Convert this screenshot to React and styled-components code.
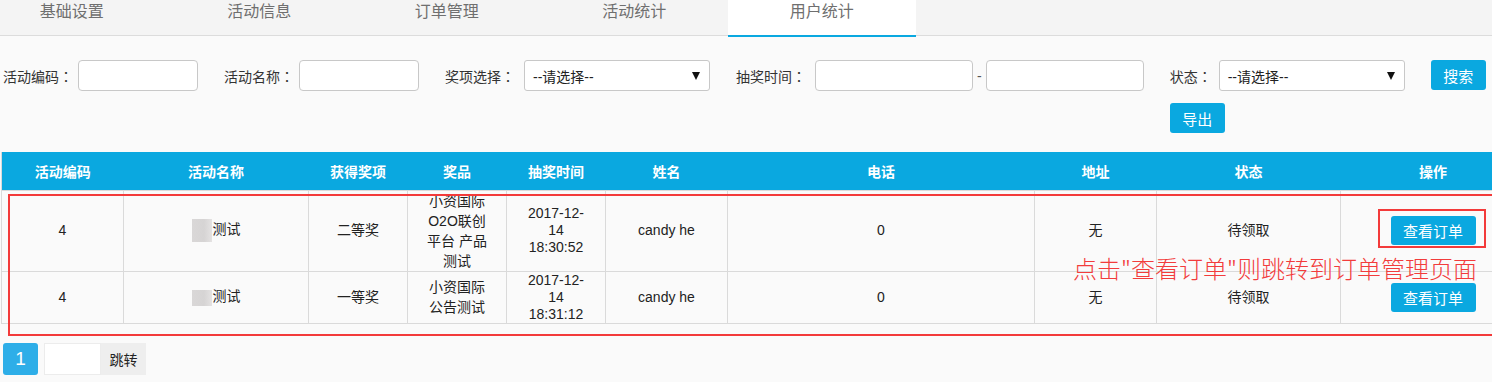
import React from "react";
import styled, { createGlobalStyle } from "styled-components";

const Global = createGlobalStyle`
  html, body { margin: 0; padding: 0; overflow: hidden; }
  body {
    background: #fafafa;
    font-family: "Liberation Sans", Arial, "Noto Sans CJK SC", sans-serif;
    font-size: 14px;
    color: #333;
  }
  * { box-sizing: border-box; }
`;

const Page = styled.div`
  width: 1492px;
  min-height: 382px;
`;

const TabBar = styled.div`
  display: flex;
  height: 36px;
  background: #f4f4f4;
  border-bottom: 1px solid #dcdcdc;
`;

const TabList = styled.div`
  display: flex;
  margin-left: -22px;
`;

const Tab = styled.div`
  width: 187.5px;
  height: 37px;
  line-height: 24px;
  text-align: center;
  font-size: 16px;
  color: #6f6f6f;
  background: ${(p) => (p.$active ? "#ffffff" : "transparent")};
  border-bottom: 2px solid ${(p) => (p.$active ? "#0aa8e0" : "transparent")};
`;

const FilterBar = styled.div`
  display: flex;
  align-items: flex-start;
  gap: 26px;
  padding: 24px 0 0 3px;
`;

const Field = styled.div`
  display: flex;
  align-items: center;
  height: 31px;
  gap: ${(p) => p.$gap || 5}px;
`;

const Label = styled.span`
  color: #333;
  white-space: nowrap;
`;

const Colon = styled.span`
  font-family: "Noto Sans CJK TC", sans-serif;
`;

const Range = styled.div`
  display: flex;
  align-items: center;
  gap: 4px;
`;

const TextInput = styled.div`
  width: ${(p) => p.$w}px;
  height: 31px;
  background: #fff;
  border: 1px solid #c8c8c8;
  border-radius: 4px;
`;

const Dash = styled.span`
  color: #555;
`;

const SelectBox = styled.div`
  width: 186px;
  height: 31px;
  background: #fff;
  border: 1px solid #c8c8c8;
  border-radius: 3px;
  display: flex;
  align-items: center;
  justify-content: space-between;
  padding: 0 9px 0 8px;
  color: #222;
`;

const Caret = styled.span`
  width: 0;
  height: 0;
  border-left: 4px solid transparent;
  border-right: 4px solid transparent;
  border-top: 8px solid #111;
`;

const StatusCol = styled.div`
  display: flex;
  flex-direction: column;
  align-items: flex-start;
  gap: 12px;
`;

const Button = styled.button`
  height: ${(p) => p.$h || 30}px;
  width: ${(p) => p.$w || 55}px;
  border: none;
  border-radius: 3px;
  background: #0aa8e0;
  color: #fff;
  font-family: "Liberation Sans", "Noto Sans CJK SC", sans-serif;
  font-size: 15px;
  padding: 0;
  cursor: pointer;
`;

const TableWrap = styled.div`
  position: relative;
  margin: 19px 0 0 1px;
`;

const Table = styled.table`
  border-collapse: collapse;
  table-layout: fixed;
  width: 1524px;
  border-left: 1px solid #dadada;

  th {
    height: 38px;
    background: #0aa8e0;
    color: #fff;
    font-weight: bold;
    font-size: 14px;
    text-align: center;
    padding: 0;
    border: none;
  }

  tbody tr:first-child td {
    border-top: 1px solid #dadada;
  }
`;

const Td = styled.td`
  text-align: center;
  vertical-align: middle;
  padding: 0 15px;
  border: 1px solid #dadada;
  border-top: none;
  color: #222;
  line-height: ${(p) => p.$lh || 17}px;
`;

const Blur = styled.span`
  display: inline-block;
  width: ${(p) => p.$w}px;
  height: ${(p) => p.$h}px;
  vertical-align: middle;
  background: linear-gradient(90deg, #d9d7d7 0%, #d6d4d4 60%, #e4e2e2 100%);
  margin-right: 1px;
`;

const AnnoBox = styled.div`
  position: absolute;
  border: 2px solid #f33a3a;
  pointer-events: none;
`;

const AnnoText = styled.div`
  position: absolute;
  left: 1072px;
  top: 102px;
  font-family: "Noto Sans CJK SC", sans-serif;
  font-weight: 300;
  font-size: 24px;
  line-height: 28px;
  color: #f23c3c;
  white-space: nowrap;
`;

const Pager = styled.div`
  display: flex;
  align-items: center;
  margin: 19px 0 0 3px;
  height: 32px;
`;

const PageNum = styled.div`
  width: 35px;
  height: 32px;
  border-radius: 3px;
  background: #2eaee8;
  color: #fff;
  font-size: 19px;
  display: flex;
  align-items: center;
  justify-content: center;
  margin-right: 6px;
`;

const JumpInput = styled.div`
  width: 57px;
  height: 32px;
  background: #fff;
  border: 1px solid #ececec;
`;

const JumpBtn = styled.div`
  width: 45px;
  height: 32px;
  background: #eeeeee;
  color: #222;
  display: flex;
  align-items: center;
  justify-content: center;
`;

const cols = [122, 185, 99, 99, 99, 122, 307, 122, 184, 185];
const heads = ["活动编码", "活动名称", "获得奖项", "奖品", "抽奖时间", "姓名", "电话", "地址", "状态", "操作"];

const rows = [
  {
    id: "4",
    blur: [20, 23],
    prize: "二等奖",
    item: "小资国际O2O联创平台 产品测试",
    time: "2017-12-14 18:30:52",
  },
  {
    id: "4",
    blur: [20, 16],
    prize: "一等奖",
    item: "小资国际公告测试",
    time: "2017-12-14 18:31:12",
  },
];

const FieldLabel = ({ children }) => (
  <Label>
    {children}
    <Colon>：</Colon>
  </Label>
);

export default function App() {
  return (
    <Page>
      <Global />
      <TabBar>
        <TabList>
          {["基础设置", "活动信息", "订单管理", "活动统计", "用户统计"].map((t, i) => (
            <Tab key={t} $active={i === 4}>
              {t}
            </Tab>
          ))}
        </TabList>
      </TabBar>

      <FilterBar>
        <Field>
          <FieldLabel>活动编码</FieldLabel>
          <TextInput $w={120} />
        </Field>
        <Field>
          <FieldLabel>活动名称</FieldLabel>
          <TextInput $w={120} />
        </Field>
        <Field $gap={9}>
          <FieldLabel>奖项选择</FieldLabel>
          <SelectBox>
            <span>--请选择--</span>
            <Caret />
          </SelectBox>
        </Field>
        <Field $gap={9}>
          <FieldLabel>抽奖时间</FieldLabel>
          <Range>
            <TextInput $w={158} />
            <Dash>-</Dash>
            <TextInput $w={158} />
          </Range>
        </Field>
        <StatusCol>
          <Field $gap={7}>
            <FieldLabel>状态</FieldLabel>
            <SelectBox>
              <span>--请选择--</span>
              <Caret />
            </SelectBox>
          </Field>
          <Button>导出</Button>
        </StatusCol>
        <Button>搜索</Button>
      </FilterBar>

      <TableWrap>
        <Table>
          <colgroup>
            {cols.map((w, i) => (
              <col key={i} style={{ width: w }} />
            ))}
          </colgroup>
          <thead>
            <tr>
              {heads.map((h) => (
                <th key={h}>{h}</th>
              ))}
            </tr>
          </thead>
          <tbody>
            {rows.map((r, i) => (
              <tr key={i}>
                <Td>{r.id}</Td>
                <Td>
                  <Blur $w={r.blur[0]} $h={r.blur[1]} />
                  测试
                </Td>
                <Td>{r.prize}</Td>
                <Td $lh={20}>{r.item}</Td>
                <Td>{r.time}</Td>
                <Td>candy he</Td>
                <Td>0</Td>
                <Td>无</Td>
                <Td>待领取</Td>
                <Td>
                  <Button $w={85} $h={29}>
                    查看订单
                  </Button>
                </Td>
              </tr>
            ))}
          </tbody>
        </Table>
        <AnnoBox style={{ left: 7, top: 42, width: 1600, height: 142 }} />
        <AnnoBox style={{ left: 1377, top: 57, width: 108, height: 39 }} />
        <AnnoText>点击"查看订单"则跳转到订单管理页面</AnnoText>
      </TableWrap>

      <Pager>
        <PageNum>1</PageNum>
        <JumpInput />
        <JumpBtn>跳转</JumpBtn>
      </Pager>
    </Page>
  );
}
